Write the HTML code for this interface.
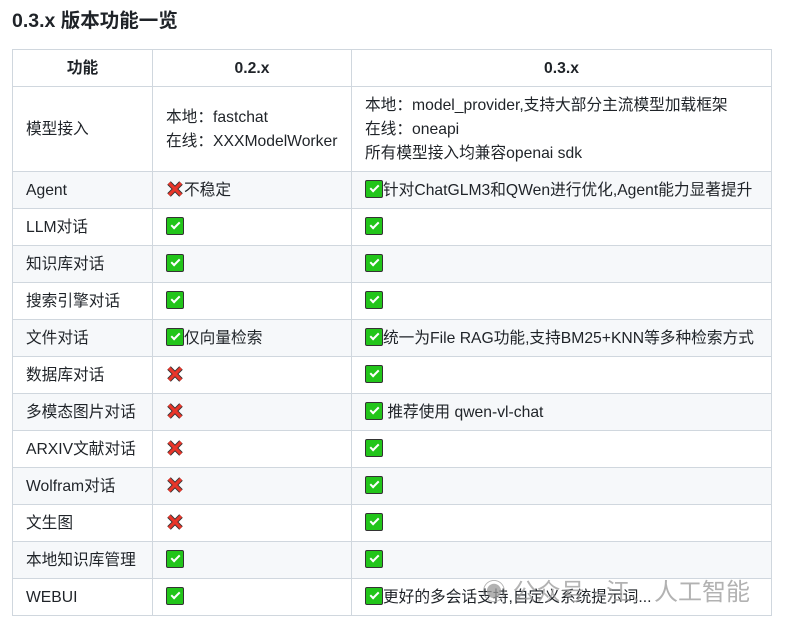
<!DOCTYPE html>
<html><head><meta charset="utf-8"><style>
body{margin:0;background:#fff;font-family:"Liberation Sans","Noto Sans CJK SC",sans-serif;color:#1f2328;}
h3{position:absolute;left:12px;top:8px;margin:0;font-size:19.5px;font-weight:bold;line-height:26px;}
table{position:absolute;left:12px;top:49px;border-collapse:collapse;font-size:15.7px;table-layout:fixed;width:759px;}
td,th{border:1px solid #d0d7de;padding:1px 13px 0;height:35px;line-height:24px;text-align:left;white-space:nowrap;overflow:visible;}
th{text-align:center;font-weight:bold;}
tr.g td{background:#f6f8fa;}
.ok{display:inline-block;background:#22c51a;border:1px solid #333;border-radius:2px;vertical-align:-3px;position:relative;box-sizing:border-box;width:18px;height:18px;}
.ok:after{content:"";position:absolute;left:4px;top:4px;width:7px;height:3px;border-left:2px solid #fff;border-bottom:2px solid #fff;transform:rotate(-45deg);}
.x{display:inline-block;width:18px;height:18px;vertical-align:-3px}
.wm{position:absolute;left:482px;top:572px;font-size:24px;color:#999;opacity:.75;}
</style></head><body>
<h3>0.3.x 版本功能一览</h3>
<table>
<colgroup><col style="width:140px"><col style="width:199px"><col style="width:420px"></colgroup>
<tr><th>功能</th><th>0.2.x</th><th>0.3.x</th></tr>
<tr><td style="height:83px">模型接入</td><td>本地：fastchat<br>在线：XXXModelWorker</td><td>本地：model_provider,支持大部分主流模型加载框架<br>在线：oneapi<br>所有模型接入均兼容openai sdk</td></tr>
<tr class="g"><td>Agent</td><td><svg class="x" viewBox="0 0 18 18"><path d="M3 3L15 15M15 3L3 15" stroke="#333" stroke-width="5"/><path d="M3 3L15 15M15 3L3 15" stroke="#e8362a" stroke-width="3.2"/></svg>不稳定</td><td><span class="ok"></span>针对ChatGLM3和QWen进行优化,Agent能力显著提升</td></tr>
<tr><td>LLM对话</td><td><span class="ok"></span></td><td><span class="ok"></span></td></tr>
<tr class="g"><td>知识库对话</td><td><span class="ok"></span></td><td><span class="ok"></span></td></tr>
<tr><td>搜索引擎对话</td><td><span class="ok"></span></td><td><span class="ok"></span></td></tr>
<tr class="g"><td>文件对话</td><td><span class="ok"></span>仅向量检索</td><td><span class="ok"></span>统一为File RAG功能,支持BM25+KNN等多种检索方式</td></tr>
<tr><td>数据库对话</td><td><svg class="x" viewBox="0 0 18 18"><path d="M3 3L15 15M15 3L3 15" stroke="#333" stroke-width="5"/><path d="M3 3L15 15M15 3L3 15" stroke="#e8362a" stroke-width="3.2"/></svg></td><td><span class="ok"></span></td></tr>
<tr class="g"><td>多模态图片对话</td><td><svg class="x" viewBox="0 0 18 18"><path d="M3 3L15 15M15 3L3 15" stroke="#333" stroke-width="5"/><path d="M3 3L15 15M15 3L3 15" stroke="#e8362a" stroke-width="3.2"/></svg></td><td><span class="ok"></span> 推荐使用 qwen-vl-chat</td></tr>
<tr><td>ARXIV文献对话</td><td><svg class="x" viewBox="0 0 18 18"><path d="M3 3L15 15M15 3L3 15" stroke="#333" stroke-width="5"/><path d="M3 3L15 15M15 3L3 15" stroke="#e8362a" stroke-width="3.2"/></svg></td><td><span class="ok"></span></td></tr>
<tr class="g"><td>Wolfram对话</td><td><svg class="x" viewBox="0 0 18 18"><path d="M3 3L15 15M15 3L3 15" stroke="#333" stroke-width="5"/><path d="M3 3L15 15M15 3L3 15" stroke="#e8362a" stroke-width="3.2"/></svg></td><td><span class="ok"></span></td></tr>
<tr><td>文生图</td><td><svg class="x" viewBox="0 0 18 18"><path d="M3 3L15 15M15 3L3 15" stroke="#333" stroke-width="5"/><path d="M3 3L15 15M15 3L3 15" stroke="#e8362a" stroke-width="3.2"/></svg></td><td><span class="ok"></span></td></tr>
<tr class="g"><td>本地知识库管理</td><td><span class="ok"></span></td><td><span class="ok"></span></td></tr>
<tr><td>WEBUI</td><td><span class="ok"></span></td><td><span class="ok"></span>更好的多会话支持,自定义系统提示词...</td></tr>
</table>
<div class="wm">◉ 公众号 · 江、人工智能</div>
</body></html>
